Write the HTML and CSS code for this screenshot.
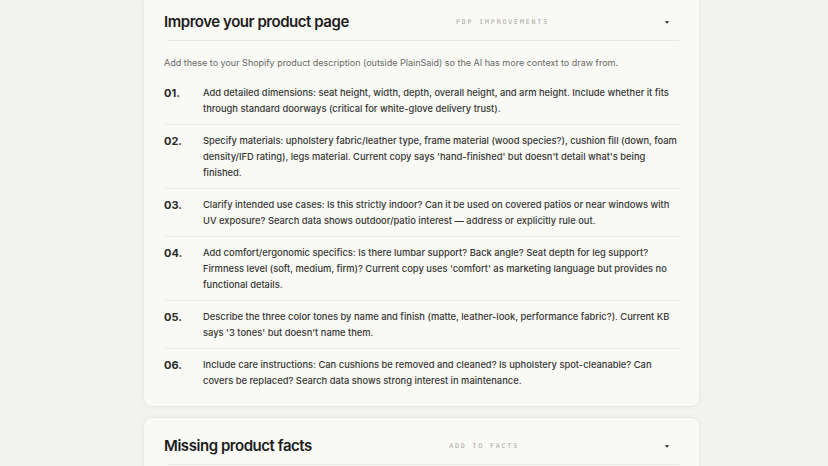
FILE: index.html
```html
<!DOCTYPE html>
<html>
<head>
<meta charset="utf-8">
<link rel="stylesheet" href="styles.css">
</head>
<body>
<main class="stack">
  <section class="card">
    <header class="card-head">
      <h2 class="card-title">Improve your product page</h2>
      <span class="tag tag-pdp">PDP IMPROVEMENTS</span>
      <span class="chev"></span>
    </header>
    <p class="intro">Add these to your Shopify product description (outside PlainSaid) so the AI has more context to draw from.</p>
    <ol class="items">
      <li class="item"><span class="num">01.</span><span class="text">Add detailed dimensions: seat height, width, depth, overall height, and arm height. Include whether it fits through standard doorways (critical for white-glove delivery trust).</span></li>
      <li class="item"><span class="num">02.</span><span class="text">Specify materials: upholstery fabric/leather type, frame material (wood species?), cushion fill (down, foam density/IFD rating), legs material. Current copy says 'hand-finished' but doesn't detail what's being finished.</span></li>
      <li class="item"><span class="num">03.</span><span class="text">Clarify intended use cases: Is this strictly indoor? Can it be used on covered patios or near windows with UV exposure? Search data shows outdoor/patio interest — address or explicitly rule out.</span></li>
      <li class="item"><span class="num">04.</span><span class="text">Add comfort/ergonomic specifics: Is there lumbar support? Back angle? Seat depth for leg support? Firmness level (soft, medium, firm)? Current copy uses 'comfort' as marketing language but provides no functional details.</span></li>
      <li class="item"><span class="num">05.</span><span class="text">Describe the three color tones by name and finish (matte, leather-look, performance fabric?). Current KB says '3 tones' but doesn't name them.</span></li>
      <li class="item"><span class="num">06.</span><span class="text">Include care instructions: Can cushions be removed and cleaned? Is upholstery spot-cleanable? Can covers be replaced? Search data shows strong interest in maintenance.</span></li>
    </ol>
  </section>
  <section class="card">
    <header class="card-head">
      <h2 class="card-title">Missing product facts</h2>
      <span class="tag tag-facts">ADD TO FACTS</span>
      <span class="chev"></span>
    </header>
  </section>
</main>
</body>
</html>
```
FILE: styles.css
```css
html, body {
  margin: 0;
  padding: 0;
  background: #f2f2ee;
  overflow: hidden;
}
body {
  font-family: Inter, "Noto Sans", sans-serif;
  color: #2f2f2c;
}
.stack {
  width: 557px;
  margin: -7px 0 0 143px;
  display: flex;
  flex-direction: column;
  gap: 10px;
}
.card {
  background: #f9f9f6;
  border: 1px solid #e9e9e4;
  border-radius: 9px;
  padding: 0 20px 10px 20px;
  box-shadow: 0 0 0 3px #f0f0ec;
}
.card-head {
  display: flex;
  align-items: center;
  height: 38px;
  padding-top: 8px;
  border-bottom: 1px solid #e8e8e3;
  margin-left: 4px;
}
.card-title {
  margin: 0 0 0 -4px;
  font-size: 15px;
  font-weight: 600;
  letter-spacing: -0.45px;
  color: #1c1c1a;
}
.tag {
  font-family: "DejaVu Sans Mono", monospace;
  font-size: 6.5px;
  letter-spacing: 1.9px;
  color: #a6a6a1;
  margin-left: auto;
  margin-top: 2px;
}
.tag-pdp { margin-right: 116px; }
.tag-facts { margin-right: 146px; }
.chev {
  width: 0;
  height: 0;
  border-left: 2px solid transparent;
  border-right: 2px solid transparent;
  border-top: 3px solid #3a3a38;
  margin-right: 10px;
  margin-top: 2px;
}
.intro {
  margin: 16px 0 9px;
  font-size: 9px;
  color: #6a6a65;
}
.items {
  list-style: none;
  margin: 0;
  padding: 0;
}
.item {
  display: flex;
  padding: 8px 0 7px;
  border-bottom: 1px solid #ebebe6;
  margin-left: 1px;
}
.item:last-child {
  border-bottom: none;
}
.num {
  width: 39px;
  flex: none;
  margin-left: -1px;
  font-size: 11px;
  font-weight: 700;
  line-height: 16px;
  color: #2a2a28;
}
.text {
  font-size: 9.35px;
  font-weight: 500;
  line-height: 16px;
  color: #363633;
  max-width: 480px;
}
```
